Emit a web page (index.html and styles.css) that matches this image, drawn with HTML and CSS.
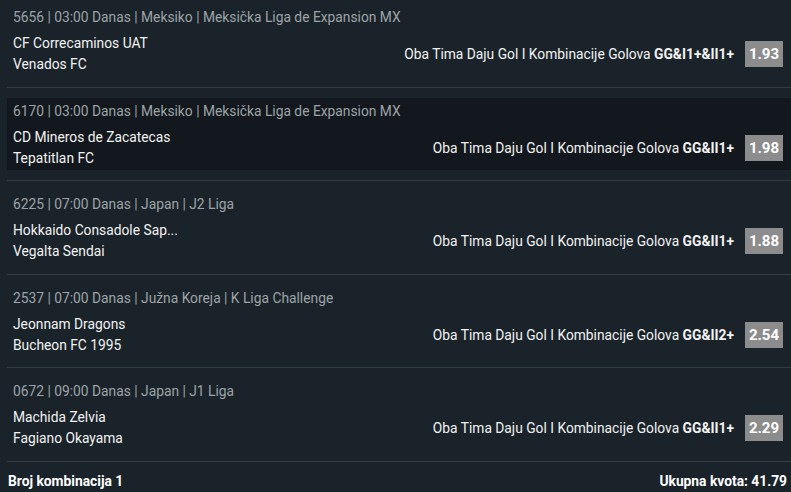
FILE: index.html
```html
<!DOCTYPE html>
<html lang="sr">
<head>
<meta charset="utf-8">
<title>Tiket</title>
<link rel="stylesheet" href="styles.css">
</head>
<body>
<div class="ticket">
  <div class="item">
    <div class="card">
      <div class="meta">5656 | 03:00 Danas | Meksiko | Meksička Liga de Expansion MX</div>
      <div class="body">
        <div class="teams"><div>CF Correcaminos UAT</div><div>Venados FC</div></div>
        <div class="pick"><span class="market">Oba Tima Daju Gol I Kombinacije Golova <b>GG&amp;I1+&amp;II1+</b></span><span class="odd">1.93</span></div>
      </div>
    </div>
  </div>
  <div class="item">
    <div class="card active">
      <div class="meta">6170 | 03:00 Danas | Meksiko | Meksička Liga de Expansion MX</div>
      <div class="body">
        <div class="teams"><div>CD Mineros de Zacatecas</div><div>Tepatitlan FC</div></div>
        <div class="pick"><span class="market">Oba Tima Daju Gol I Kombinacije Golova <b>GG&amp;II1+</b></span><span class="odd">1.98</span></div>
      </div>
    </div>
  </div>
  <div class="item">
    <div class="card">
      <div class="meta">6225 | 07:00 Danas | Japan | J2 Liga</div>
      <div class="body">
        <div class="teams"><div>Hokkaido Consadole Sap...</div><div>Vegalta Sendai</div></div>
        <div class="pick"><span class="market">Oba Tima Daju Gol I Kombinacije Golova <b>GG&amp;II1+</b></span><span class="odd">1.88</span></div>
      </div>
    </div>
  </div>
  <div class="item">
    <div class="card">
      <div class="meta">2537 | 07:00 Danas | Južna Koreja | K Liga Challenge</div>
      <div class="body">
        <div class="teams"><div>Jeonnam Dragons</div><div>Bucheon FC 1995</div></div>
        <div class="pick"><span class="market">Oba Tima Daju Gol I Kombinacije Golova <b>GG&amp;II2+</b></span><span class="odd">2.54</span></div>
      </div>
    </div>
  </div>
  <div class="item">
    <div class="card">
      <div class="meta">0672 | 09:00 Danas | Japan | J1 Liga</div>
      <div class="body">
        <div class="teams"><div>Machida Zelvia</div><div>Fagiano Okayama</div></div>
        <div class="pick"><span class="market">Oba Tima Daju Gol I Kombinacije Golova <b>GG&amp;II1+</b></span><span class="odd">2.29</span></div>
      </div>
    </div>
  </div>
  <div class="footer">
    <span>Broj kombinacija 1</span>
    <span>Ukupna kvota: 41.79</span>
  </div>
</div>
</body>
</html>
```
FILE: styles.css
```css
html, body {
  margin: 0;
  padding: 0;
  background: #1a232a;
  height: 100%;
  overflow: hidden;
}
body {
  font-family: Roboto, "Liberation Sans", sans-serif;
  font-size: 13.8px;
  color: #f2f2f2;
}
.ticket {
  padding-left: 7px;
}
.item {
  padding: 10px 0 10.5px;
  border-bottom: 1px solid #2e3d46;
}
.item:first-child {
  padding-top: 4px;
}
.card {
  height: 72px;
  box-sizing: border-box;
  padding: 3px 8px 0 6px;
}
.card.active {
  background: #12181d;
}
.meta {
  color: #9ea3a7;
  line-height: 20px;
  white-space: nowrap;
}
.body {
  display: flex;
  justify-content: space-between;
  align-items: center;
  margin-top: 6px;
}
.teams {
  line-height: 21px;
}
.pick {
  display: flex;
  align-items: center;
  gap: 11px;
}
.market b {
  font-weight: 700;
}
.odd {
  display: inline-block;
  width: 38px;
  height: 26px;
  line-height: 26px;
  text-align: center;
  background: #8c8c8c;
  color: #fff;
  font-weight: 700;
  font-size: 15px;
}
.footer {
  display: flex;
  justify-content: space-between;
  padding: 9px 4px 0 1px;
  line-height: 20px;
  font-weight: 700;
  color: #fff;
}
```
